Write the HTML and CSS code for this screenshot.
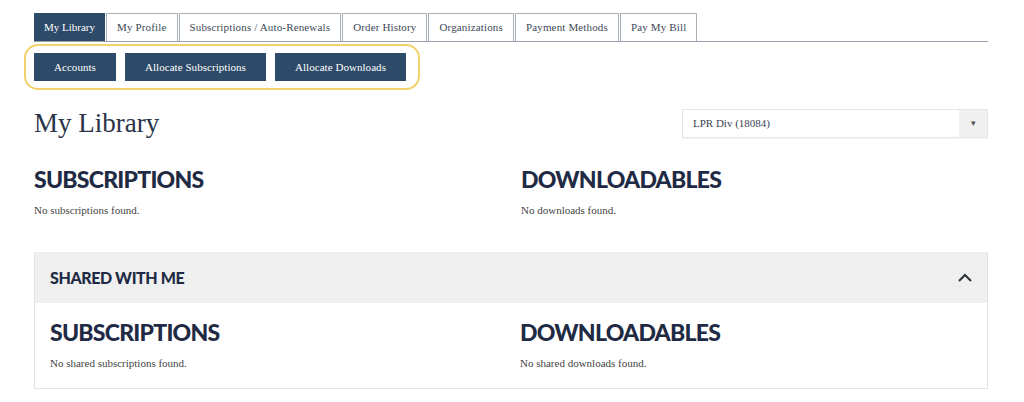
FILE: index.html
```html
<!DOCTYPE html>
<html lang="en">

<head>
    <meta charset="UTF-8">
    <meta name="viewport" content="width=device-width, initial-scale=1.0">
    <title>My Library</title>
    <link rel="stylesheet" href="styles.css">
</head>

<body>

    <div class="page">

        <ul class="tabs">
            <li class="tab active">My Library</li>
            <li class="tab">My Profile</li>
            <li class="tab">Subscriptions / Auto-Renewals</li>
            <li class="tab">Order History</li>
            <li class="tab">Organizations</li>
            <li class="tab">Payment Methods</li>
            <li class="tab">Pay My Bill</li>
        </ul>

        <div class="subnav">
            <button type="button" class="subnav-btn">Accounts</button>
            <button type="button" class="subnav-btn">Allocate Subscriptions</button>
            <button type="button" class="subnav-btn">Allocate Downloads</button>
        </div>

        <div class="title-row">
            <h1>My Library</h1>
            <div class="account-select">
                <span class="account-name">LPR Div (18084)</span>
                <span class="account-arrow">&#9662;</span>
            </div>
        </div>

        <div class="columns">
            <div class="column">
                <h2>SUBSCRIPTIONS</h2>
                <p>No subscriptions found.</p>
            </div>
            <div class="column">
                <h2>DOWNLOADABLES</h2>
                <p>No downloads found.</p>
            </div>
        </div>

        <div class="shared">
            <div class="shared-header">
                <h3>SHARED WITH ME</h3>
                <svg class="chevron" width="16" height="10" viewBox="0 0 16 10">
                    <path d="M2 8 L8 2 L14 8" fill="none" stroke="#2a2f38" stroke-width="2"/>
                </svg>
            </div>
            <div class="columns shared-body">
                <div class="column">
                    <h2>SUBSCRIPTIONS</h2>
                    <p>No shared subscriptions found.</p>
                </div>
                <div class="column">
                    <h2>DOWNLOADABLES</h2>
                    <p>No shared downloads found.</p>
                </div>
            </div>
        </div>

    </div>

</body>

</html>
```

FILE: styles.css
```css
* {
    margin: 0;
    padding: 0;
    box-sizing: border-box;
}

body {
    font-family: 'Liberation Serif', 'Times New Roman', serif;
    background-color: #fff;
    color: #3a4250;
}

.page {
    width: 988px;
    padding: 13px 0 0 34px;
}

.tabs {
    list-style: none;
    display: flex;
    gap: 1px;
    border-bottom: 1px solid #9aa3ad;
}

.tab {
    height: 28px;
    line-height: 27px;
    padding: 0 10px;
    font-size: 11px;
    letter-spacing: 0.15px;
    color: #3d4957;
    border: 1px solid #a9b0b8;
    border-bottom: none;
    background-color: #fff;
}

.tab.active {
    background-color: #2d4a68;
    border-color: #2d4a68;
    color: #fff;
    padding: 0 9px;
    letter-spacing: 0;
}

.subnav {
    display: inline-flex;
    gap: 9px;
    margin: 2px 0 0 -10px;
    padding: 7px 12px 7px 8px;
    border: 2px solid #f1d26c;
    border-radius: 14px;
}

.subnav-btn {
    height: 28px;
    padding: 0 20px;
    font-family: 'Liberation Serif', 'Times New Roman', serif;
    font-size: 11px;
    letter-spacing: 0.05px;
    color: #fff;
    background-color: #2d4a68;
    border: none;
}

.title-row {
    display: flex;
    justify-content: space-between;
    align-items: center;
    margin-top: 19px;
    height: 28px;
}

h1 {
    font-size: 27px;
    font-weight: normal;
    line-height: 28px;
    color: #2a3448;
}

.account-select {
    display: flex;
    width: 306px;
    height: 29px;
    border: 1px solid #e6e6e6;
    box-shadow: 0 1px 1px rgba(0, 0, 0, 0.04);
}

.account-name {
    flex: 1;
    padding-left: 10px;
    line-height: 27px;
    font-size: 11px;
    color: #3a4250;
}

.account-arrow {
    width: 28px;
    text-align: center;
    line-height: 27px;
    font-size: 9px;
    color: #555;
    background-color: #f0f0f0;
}

.columns {
    display: grid;
    grid-template-columns: 487px 1fr;
    margin-top: 31px;
}

h2 {
    font-family: Lato, 'Liberation Sans', sans-serif;
    font-weight: 900;
    font-size: 23px;
    letter-spacing: -0.75px;
    line-height: 23px;
    color: #1f2a44;
}

.column p {
    margin-top: 12px;
    font-size: 11px;
    line-height: 14px;
    color: #444;
}

.shared {
    margin-top: 35px;
    border: 1px solid #e3e3e3;
    border-top: none;
}

.shared-header {
    display: flex;
    justify-content: space-between;
    align-items: center;
    height: 51px;
    padding: 0 14px 0 15px;
    background-color: #efefef;
}

h3 {
    font-family: Lato, 'Liberation Sans', sans-serif;
    font-weight: 900;
    font-size: 16px;
    letter-spacing: -0.4px;
    color: #1f2a44;
}

.shared-body {
    grid-template-columns: 470px 1fr;
    margin-top: 0;
    padding: 18px 16px 18px 15px;
}
```
